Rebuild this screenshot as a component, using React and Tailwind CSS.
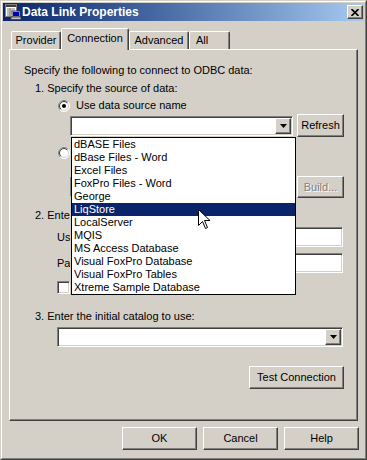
import React from 'react';

const raised =
  'bg-[#d4d0c8] border border-t-white border-l-white border-r-[#404040] border-b-[#404040] shadow-[inset_-1px_-1px_0_#808080]';
const sunken =
  'bg-white border border-t-[#808080] border-l-[#808080] border-r-white border-b-white shadow-[inset_1px_1px_0_#404040,inset_-1px_-1px_0_#d4d0c8]';

const SOURCES = [
  'dBASE Files',
  'dBase Files - Word',
  'Excel Files',
  'FoxPro Files - Word',
  'George',
  'LiqStore',
  'LocalServer',
  'MQIS',
  'MS Access Database',
  'Visual FoxPro Database',
  'Visual FoxPro Tables',
  'Xtreme Sample Database',
];

function Radio({ checked }) {
  return (
    <svg width="12" height="12" viewBox="0 0 12 12" className="shrink-0">
      <circle cx="6" cy="6" r="5.5" fill="#fff" stroke="#fff" />
      <circle cx="6" cy="6" r="4.5" fill="#fff" stroke="#d4d0c8" />
      <path d="M2.1 9.9 A5.5 5.5 0 0 1 9.9 2.1" stroke="#808080" fill="none" />
      <path d="M2.8 9.2 A4.5 4.5 0 0 1 9.2 2.8" stroke="#404040" fill="none" />
      {checked && <circle cx="6" cy="6" r="2" fill="#000" />}
    </svg>
  );
}

function Button({ children, className = '', disabled }) {
  return (
    <div className={`${raised} flex items-center justify-center shrink-0 ${className}`}>
      <span className={disabled ? 'text-[#808080] [text-shadow:1px_1px_0_#fff]' : ''}>{children}</span>
    </div>
  );
}

function Combo({ className = '' }) {
  return (
    <div className={`${sunken} flex justify-end p-[1px] shrink-0 ${className}`}>
      <div className={`${raised} w-[16px] h-full flex items-center justify-center`}>
        <svg width="7" height="4" viewBox="0 0 7 4">
          <path d="M0 0 H7 L3.5 4 Z" fill="#000" />
        </svg>
      </div>
    </div>
  );
}

function Tab({ label, active, className = '' }) {
  return (
    <div
      className={`flex justify-center border-t border-l border-t-white border-l-white border-r border-r-[#404040] shadow-[inset_-1px_0_0_#808080] rounded-tl-[2px] rounded-tr-[2px] bg-[#d4d0c8] ${
        active ? 'relative z-10 h-[22px] mb-[-1px] pt-[3px]' : 'h-[18px] pt-[2px]'
      } ${className}`}
    >
      {label}
    </div>
  );
}

function TitleIcon() {
  return (
    <svg width="16" height="16" viewBox="0 0 16 16">
      <rect x="0.5" y="0.5" width="11" height="12" fill="#fff" stroke="#808080" />
      <rect x="1" y="1" width="10" height="2" fill="#404040" />
      <path d="M2 5 H10 M2 7 H10 M2 9 H10 M2 11 H6 M5 4 V12" stroke="#808080" />
      <rect x="7" y="7" width="8" height="6" fill="#c0c0c0" stroke="#404040" strokeWidth="0.8" />
      <rect x="8" y="8" width="6" height="4" fill="#0000c0" />
      <rect x="6" y="13" width="10" height="2.5" fill="#c0c0c0" stroke="#404040" strokeWidth="0.8" />
    </svg>
  );
}

// text that runs under the open list is cut off where the list starts (x=70)
function Clipped({ width, children }) {
  return (
    <div className="overflow-hidden whitespace-nowrap shrink-0" style={{ width }}>
      {children}
    </div>
  );
}

export default function App() {
  return (
    <div className="relative w-[367px] h-[460px] bg-[#d4d0c8] border border-t-[#d4d0c8] border-l-[#d4d0c8] border-r-[#404040] border-b-[#404040] font-['Liberation_Sans',Arial,sans-serif] text-[11px] leading-[13px] text-black select-none">
      <div className="h-full border border-t-white border-l-white border-r-[#808080] border-b-[#808080] p-px flex flex-col">
        {/* title bar */}
        <div className="h-[18px] flex items-center bg-linear-to-r from-[#0a246a] to-[#a6caf0]">
          <div className="ml-[2px]">
            <TitleIcon />
          </div>
          <span className="ml-[1px] text-white font-bold text-[12px]">Data Link Properties</span>
          <div className={`${raised} ml-auto mr-[1px] w-[16px] h-[14px] flex items-center justify-center`}>
            <svg width="8" height="7" viewBox="0 0 8 7">
              <path d="M0.5 0 L7.5 7 M7.5 0 L0.5 7" stroke="#000" strokeWidth="1.6" />
            </svg>
          </div>
        </div>

        {/* tabs */}
        <div className="mt-[7px] ml-[6px] h-[21px] flex items-end">
          <Tab label="Provider" className="ml-[2px] w-[50px]" />
          <Tab label="Connection" active className="w-[68px]" />
          <Tab label="Advanced" className="w-[60px]" />
          <Tab label="All" className="w-[41px] justify-start pl-[6px]" />
        </div>

        {/* panel */}
        <div className="ml-[6px] w-[349px] h-[372px] flex flex-col border border-t-white border-l-white border-r-[#404040] border-b-[#404040] shadow-[inset_-1px_-1px_0_#808080]">
          <div className="mt-[14px] ml-[14px] h-[13px]">Specify the following to connect to ODBC data:</div>
          <div className="mt-[5px] ml-[25px] h-[13px]">1. Specify the source of data:</div>
          <div className="mt-[4px] ml-[48px] h-[13px] flex items-center gap-[6px]">
            <Radio checked />
            <span>Use data source name</span>
          </div>
          <div className="mt-[2px] ml-[60px] h-[23px] flex items-center gap-[4px]">
            <Combo className="w-[223px] h-[20px]" />
            <Button className="w-[47px] h-[23px]">Refresh</Button>
          </div>
          <div className="mt-[9px] ml-[48px] h-[13px] flex items-center">
            <Radio />
          </div>
          <div className="mt-[17px] ml-[60px] h-[22px] flex items-center gap-[4px]">
            <div className={`${sunken} w-[223px] h-[20px]`} />
            <Button disabled className="w-[47px] h-[22px]">Build...</Button>
          </div>
          <div className="mt-[11px] ml-[25px] h-[13px]">
            <Clipped width={35}>2. Enter information to log on to the server:</Clipped>
          </div>
          <div className="mt-[5px] ml-[47px] h-[20px] flex items-center">
            <div className="w-[65px]">
              <Clipped width={13}>User name:</Clipped>
            </div>
            <div className={`${sunken} w-[221px] h-[20px]`} />
          </div>
          <div className="mt-[6px] ml-[47px] h-[20px] flex items-center">
            <div className="w-[65px]">
              <Clipped width={13}>Password:</Clipped>
            </div>
            <div className={`${sunken} w-[221px] h-[20px]`} />
          </div>
          <div className="mt-[8px] ml-[47px] h-[13px] flex items-center">
            <div className={`${sunken} w-[13px] h-[13px]`} />
          </div>
          <div className="mt-[16px] ml-[25px] h-[13px]">3. Enter the initial catalog to use:</div>
          <div className="mt-[4px] ml-[47px]">
            <Combo className="w-[286px] h-[20px]" />
          </div>
          <div className="mt-[19px] ml-[239px]">
            <Button className="w-[95px] h-[23px]">Test Connection</Button>
          </div>
        </div>

        {/* dialog buttons */}
        <div className="mt-[6px] mr-[5px] flex justify-end gap-[6px]">
          <Button className="w-[75px] h-[23px]">OK</Button>
          <Button className="w-[75px] h-[23px]">Cancel</Button>
          <Button className="w-[75px] h-[23px]">Help</Button>
        </div>
      </div>

      {/* open drop-down list */}
      <div className="absolute left-[70px] top-[136px] w-[225px] h-[158px] bg-white border border-black z-20">
        {SOURCES.map((s) => (
          <div
            key={s}
            className={`h-[13px] pl-[2px] leading-[13px] ${s === 'LiqStore' ? 'bg-[#0a246a] text-white' : ''}`}
          >
            {s}
          </div>
        ))}
      </div>

      {/* mouse pointer */}
      <svg className="absolute left-[197px] top-[208px] z-30" width="13" height="21" viewBox="0 0 13 21">
        <path
          d="M0.5 0.5 V16.5 L4.5 12.5 L7.5 19.5 L9.5 18.5 L6.5 11.5 H12 Z"
          fill="#fff"
          stroke="#000"
          strokeLinejoin="miter"
        />
      </svg>
    </div>
  );
}
